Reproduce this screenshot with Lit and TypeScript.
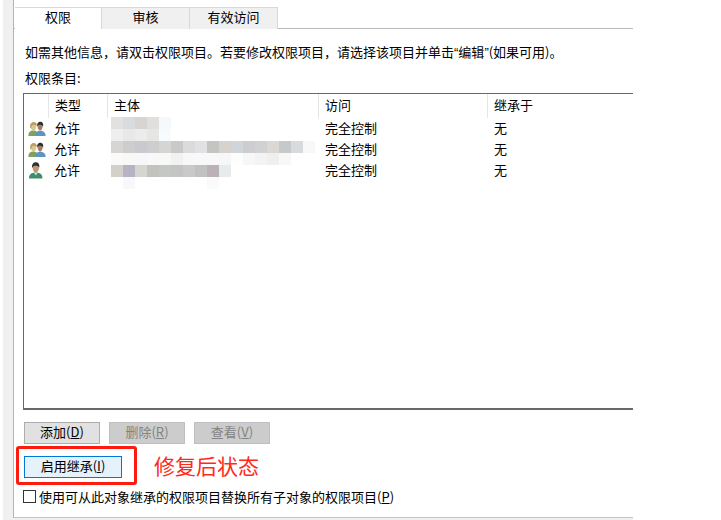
import { LitElement, html, css, svg } from "lit";
import { customElement } from "lit/decorators.js";

const BLOCKS: string[][] = [
  ["e3e1e0", "d9dcdf", "d6d5d3", "e0dfdd", "f5f9fc"],
  ["eeeeee", "e8e8e8", "ececec", "e6e6e4", "f8fbfd"],
  ["d6d5d4", "cdcdcd", "cbc8cf", "cfcecf", "d5d5d3", "c9c9c9", "dcdadb", "e0e1e3", "c4c4c2", "d8d2cd", "d0d5d9", "cdcdcf", "cfd1d3", "dbd8d4", "c5c9cc", "d9dadd", "f8f8f8"],
  ["fafafa", "f8f8f6", "f7f7f9", "f8f8f8", "f8f8f8", "f2f2f2", "f8f8f8", "f8f8f8", "f8f8f8", "f6f7f8", "fdfdfb", "f7f7f5", "f3f3f3", "efefef", "f8f8f6"],
  ["d2d0c8", "b5b3c4", "d6d5d1", "c3c3be", "c5c7c5", "c3c4c4", "c9c9c9", "c0c1c0", "bcb1b6", "e7ebec"],
  ["ffffff", "f8f8fa", "ffffff", "ffffff", "ffffff", "ffffff", "ffffff", "ffffff", "fafafa"],
];

const groupIcon = svg`<svg class="icon" width="18" height="16" viewBox="0 0 18 16">
  <path d="M.4 15 C.2 11 2.4 9.4 5.4 9.4 C8.4 9.4 10 11 10 15 Z" fill="#7da258"/>
  <path d="M2.8 6 C2.8 3.6 4 2.6 5.6 2.6 C7.2 2.6 8.4 3.8 8.2 6 C8 8.2 6.8 9.6 5.4 9.6 C4 9.6 2.9 8 2.8 6 Z" fill="#dcc596"/>
  <path d="M2.2 7.6 C1.4 3 3.4 1 5.6 1 C7.8 1 9.2 2.6 8.8 5 C7.6 4 5.4 3.8 4 4.6 C3.6 5.6 3.4 6.8 2.2 7.6 Z" fill="#b9a268"/>
  <path d="M7.4 15 C7.2 11.4 9.4 9.8 12.2 9.8 C15.2 9.8 17.6 11.4 17.6 15 Z" fill="#5f94c2"/>
  <path d="M9.6 5.6 C9.6 3.4 10.6 2.4 12.2 2.4 C13.8 2.4 14.8 3.6 14.7 5.6 C14.6 7.8 13.4 9.6 12.1 9.6 C10.8 9.6 9.6 7.8 9.6 5.6 Z" fill="#a97d5c"/>
  <path d="M9.2 5.6 C8.8 2.2 10.6 .8 12.4 .8 C14.2 .8 15.6 2.2 15.2 5.4 C14.4 3.8 11.6 3.4 10.2 4 Z" fill="#2c3136"/>
</svg>`;

const userIcon = svg`<svg class="icon" width="18" height="17" viewBox="0 0 18 17">
  <path d="M1 16.6 C.8 12.6 3.4 10.6 7.8 10.6 C12.2 10.6 14.6 12.6 14.4 16.6 Z" fill="#3d8d6a"/>
  <path d="M5.8 10.4 L9.8 10.4 L7.9 13.6 Z" fill="#d5e4da"/>
  <path d="M4.6 5.8 C4.6 3.2 5.8 2 7.8 2 C9.8 2 11.2 3.4 11 5.8 C10.8 8.6 9.4 10.8 7.8 10.8 C6.2 10.8 4.7 8.4 4.6 5.8 Z" fill="#bf9674"/>
  <path d="M4.2 6 C3.4 2 5.6 .2 7.8 .2 C10.2 .2 11.8 2 11.4 5.4 C10.4 3.8 7.4 3.4 5.4 4.2 Z" fill="#2e3033"/>
</svg>`;

@customElement("app-root")
export class AppRoot extends LitElement {
  static styles = css`
    :host {
      display: block;
      width: 721px;
      height: 520px;
      background: #fff;
      overflow: hidden;
      font-family: "Noto Sans CJK SC", "Liberation Sans", sans-serif;
      font-size: 13px;
      color: #000;
    }
    .shell {
      box-sizing: border-box;
      width: 630px;
      height: 520px;
      margin-left: 3px;
      padding: 0 0 2px 10px;
      background: #f0f0f0;
    }
    .panel {
      box-sizing: border-box;
      height: 100%;
      background: #fff;
      border-left: 1px solid #b4b4b4;
      border-bottom: 1px solid #c4c4c4;
      overflow: hidden;
    }
    .tabs {
      display: flex;
      height: 29px;
      box-sizing: border-box;
      padding: 7px 0 0 1px;
      border-bottom: 1px solid #b9b9b9;
    }
    .tab {
      box-sizing: border-box;
      width: 88px;
      height: 22px;
      line-height: 18px;
      text-align: center;
      background: #f0f0f0;
      border: 1px solid #d9d9d9;
      border-left-width: 0;
      border-bottom: 0;
    }
    .tab:first-child {
      width: 87px;
      height: 22px;
      background: #fff;
      border-left-width: 0;
      border-right: 1px solid #d9d9d9;
    }
    .intro {
      margin: 14px 0 0 11px;
      height: 19px;
      line-height: 17px;
      white-space: nowrap;
    }
    .q { font-family: "Liberation Sans", sans-serif; }
    .caption {
      margin: 7px 0 0 11px;
      height: 19px;
      line-height: 17px;
    }
    .list {
      position: relative;
      box-sizing: border-box;
      margin: 5px 0 0 9px;
      width: 700px;
      height: 317px;
      border: 1px solid #696969;
      border-bottom-width: 2px;
    }
    .row {
      display: grid;
      grid-template-columns: 24px 59px 211px 169px 1fr;
      height: 21px;
      line-height: 19px;
      white-space: nowrap;
    }
    .row.head { height: 24px; line-height: 21px; }
    .row > span { padding-left: 7px; }
    .row > span:nth-child(2) { padding-left: 6px; }
    .row.head > span { padding-left: 6px; border-left: 1px solid #e5e5e5; }
    .row.head > span:first-child { border-left: 0; }
    .row .ic { padding-left: 4px; display: flex; align-items: center; }
    .icon { display: block; filter: blur(0.3px); }
    .blocks {
      position: absolute;
      left: 87px;
      top: 23px;
      display: flex;
      flex-direction: column;
    }
    .blockrow { display: flex; height: 12px; }
    .block { width: 12px; height: 12px; }
    .actions {
      display: flex;
      gap: 9px;
      margin: 12px 0 0 10px;
    }
    button {
      box-sizing: border-box;
      width: 76px;
      height: 22px;
      padding: 0 0 2px;
      font: inherit;
      line-height: 18px;
      color: #000;
      background: #e1e1e1;
      border: 1px solid #adadad;
      white-space: nowrap;
    }
    button[disabled] {
      background: #ccc;
      border-color: #bfbfbf;
      color: #838383;
    }
    u { text-underline-offset: 1px; }
    .repair {
      display: flex;
      align-items: center;
      margin: 2px 0 0 2px;
    }
    .mark {
      box-sizing: border-box;
      width: 121px;
      height: 39px;
      padding: 7px 0 0 5px;
      border: 3px solid #ff1a0f;
      border-radius: 3px;
    }
    .mark button {
      width: 98px;
      height: 22px;
      background: #e5f1fb;
      border-color: #0078d7;
    }
    .note {
      margin: -2px 0 0 17px;
      font-size: 21px;
      line-height: 28px;
      color: #ff2a1a;
      white-space: nowrap;
    }
    .replace {
      display: flex;
      align-items: center;
      margin: 1px 0 0 9px;
      height: 20px;
      white-space: nowrap;
    }
    .box {
      box-sizing: border-box;
      width: 13px;
      height: 13px;
      margin-right: 3px;
      border: 1px solid #333;
      background: #fff;
    }
  `;

  private row(icon: unknown, name = "") {
    return html`<div class="row">
      <span class="ic">${icon}</span>
      <span>允许</span>
      <span>${name}</span>
      <span>完全控制</span>
      <span>无</span>
    </div>`;
  }

  render() {
    return html`<div class="shell">
      <div class="panel">
        <div class="tabs">
          <div class="tab">权限</div>
          <div class="tab">审核</div>
          <div class="tab">有效访问</div>
        </div>
        <div class="intro">如需其他信息，请双击权限项目。若要修改权限项目，请选择该项目并单击<span class="q">“</span>编辑<span class="q">”</span>(如果可用)。</div>
        <div class="caption">权限条目:</div>
        <div class="list">
          <div class="row head">
            <span></span><span>类型</span><span>主体</span><span>访问</span><span>继承于</span>
          </div>
          ${this.row(groupIcon)}
          ${this.row(groupIcon)}
          ${this.row(userIcon)}
          <div class="blocks">
            ${BLOCKS.map(
              (r) => html`<div class="blockrow">
                ${r.map((c) => html`<i class="block" style="background:#${c}"></i>`)}
              </div>`
            )}
          </div>
        </div>
        <div class="actions">
          <button>添加(<u>D</u>)</button>
          <button disabled>删除(<u>R</u>)</button>
          <button disabled>查看(<u>V</u>)</button>
        </div>
        <div class="repair">
          <div class="mark"><button>启用继承(<u>I</u>)</button></div>
          <div class="note">修复后状态</div>
        </div>
        <div class="replace">
          <span class="box"></span>
          <span>使用可从此对象继承的权限项目替换所有子对象的权限项目(<u>P</u>)</span>
        </div>
      </div>
    </div>`;
  }
}
